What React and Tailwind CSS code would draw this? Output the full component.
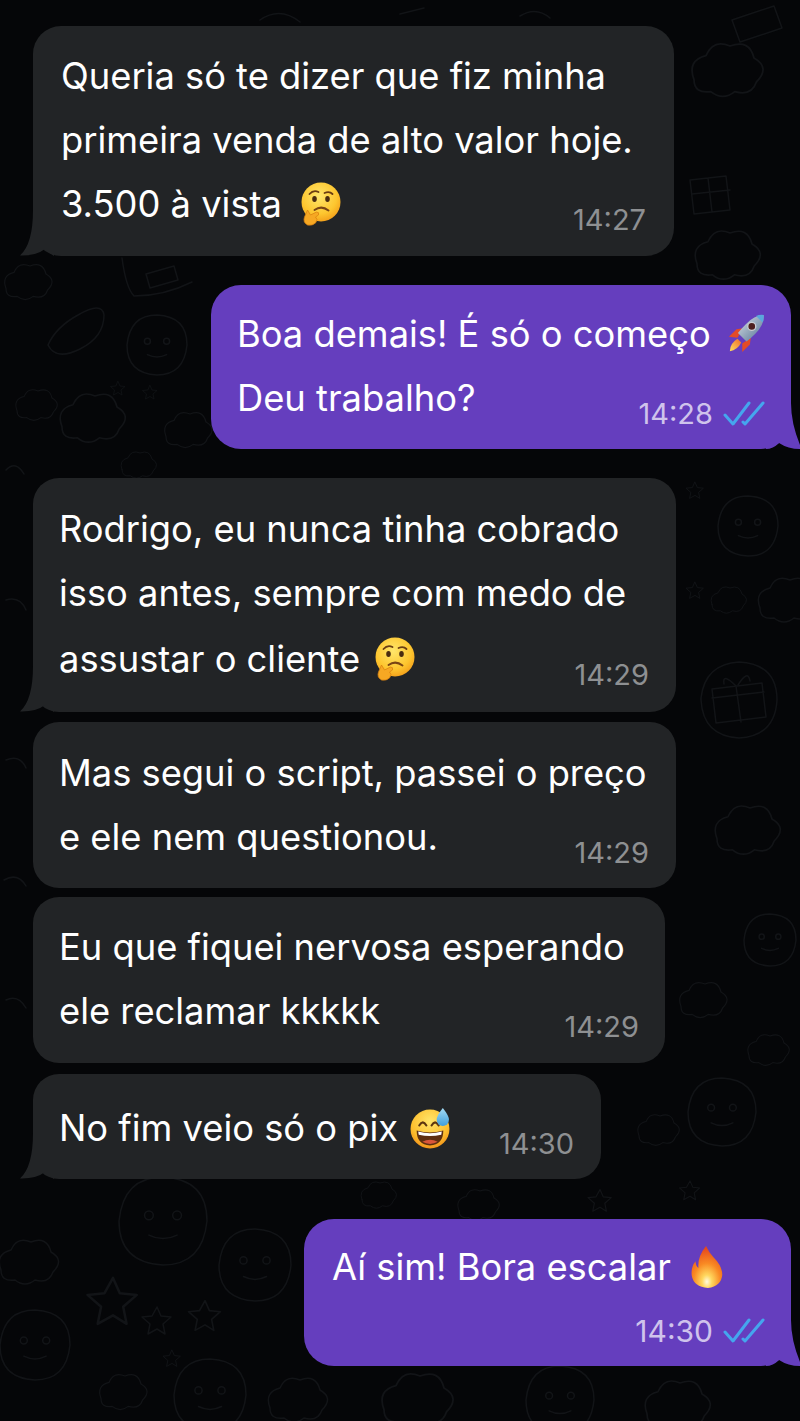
import React from "react";

const FONT = "font-['Inter','Liberation_Sans',sans-serif]";

function Thinking({ className }) {
  return (
    <svg viewBox="0 0 40 44" className={className}>
      <defs>
        <radialGradient id="tg" cx="0.45" cy="0.35" r="0.7">
          <stop offset="0" stopColor="#ffe66b" />
          <stop offset="0.65" stopColor="#fdc62f" />
          <stop offset="1" stopColor="#f29a17" />
        </radialGradient>
      </defs>
      <circle cx="20.5" cy="20" r="19.5" fill="url(#tg)" />
      <path d="M9 12 q4 -4.5 9 -2" fill="none" stroke="#6b3d12" strokeWidth="1.8" strokeLinecap="round" />
      <path d="M24 11 q5 -2 8 1" fill="none" stroke="#6b3d12" strokeWidth="1.8" strokeLinecap="round" />
      <ellipse cx="14" cy="17" rx="2.3" ry="3" fill="#4a2c10" />
      <ellipse cx="27" cy="17" rx="2.3" ry="3" fill="#4a2c10" />
      <path d="M14 28 q7 -5 14 0.5" fill="none" stroke="#7a4514" strokeWidth="2" strokeLinecap="round" />
      <path d="M7 28 l3 5 l6 -3 q3 0 2 3 l-3 2 q3 2 0 6 q-3 3 -8 2 q-5 -3 -3 -8 z" fill="#f6a823" stroke="#d9800f" strokeWidth="0.7" />
    </svg>
  );
}

function Sweat({ className }) {
  return (
    <svg viewBox="0 0 40 40" className={className}>
      <defs>
        <radialGradient id="sg" cx="0.5" cy="0.3" r="0.75">
          <stop offset="0" stopColor="#ffe56a" />
          <stop offset="0.65" stopColor="#fdbe2d" />
          <stop offset="1" stopColor="#ef8a16" />
        </radialGradient>
        <linearGradient id="dg" x1="0" y1="0" x2="0" y2="1">
          <stop offset="0" stopColor="#a5dcf5" />
          <stop offset="1" stopColor="#3f9fdc" />
        </linearGradient>
      </defs>
      <circle cx="19.5" cy="20.5" r="19" fill="url(#sg)" />
      <path d="M9 17 q3.5 -6 7 0 M21 17 q3.5 -6 7 0" fill="none" stroke="#5c3510" strokeWidth="2" strokeLinecap="round" />
      <path d="M6.5 22 q13 4 26 0 q0 14 -13 14.5 q-13 -0.5 -13 -14.5 z" fill="#5e2f10" />
      <path d="M8 23 q11.5 3.2 23 0 l-0.5 3 q-11 2.8 -22 0 z" fill="#fff" />
      <path d="M12 33 q7.5 -4 15 0 q-7.5 4 -15 0 z" fill="#d9563a" />
      <path d="M32 0 q6 7.5 6 11.5 a6 6 0 0 1 -12 0 q0 -4 6 -11.5 z" fill="url(#dg)" />
    </svg>
  );
}

function Rocket({ className }) {
  return (
    <svg viewBox="0 0 40 42" className={className}>
      <defs>
        <linearGradient id="rb" x1="0" y1="0" x2="1" y2="1">
          <stop offset="0" stopColor="#dbe3ea" />
          <stop offset="0.55" stopColor="#8fa3b8" />
          <stop offset="1" stopColor="#4e6f99" />
        </linearGradient>
        <linearGradient id="rf" x1="1" y1="0" x2="0" y2="1">
          <stop offset="0" stopColor="#f0692a" />
          <stop offset="1" stopColor="#fde25e" />
        </linearGradient>
      </defs>
      <path d="M2 24 l8 -8 l7 -1 l-6 10 z" fill="#e34b26" />
      <path d="M16 40 l8 -8 l1 -7 l-9 6 z" fill="#e34b26" />
      <path d="M3 39 q0 -8 8 -13 l4 4 q-4 8 -12 9 z" fill="url(#rf)" />
      <path d="M38.5 1 q1 10 -9 20 q-5 5 -9 8 l-9 -9 q3 -4 8 -9 q9 -10 19 -10 z" fill="url(#rb)" />
      <path d="M38.5 1 q0.5 4 -1 8 l-7 -7 q4 -1.5 8 -1 z" fill="#5aa8dd" />
      <circle cx="26" cy="13" r="4.2" fill="#4c1f1f" stroke="#c9ced4" strokeWidth="1.4" />
    </svg>
  );
}

function Fire({ className }) {
  return (
    <svg viewBox="0 0 34 44" className={className}>
      <defs>
        <radialGradient id="ff" cx="0.5" cy="0.85" r="0.8">
          <stop offset="0" stopColor="#fffbe0" />
          <stop offset="0.2" stopColor="#ffd75e" />
          <stop offset="0.55" stopColor="#f98a23" />
          <stop offset="1" stopColor="#e6481c" />
        </radialGradient>
      </defs>
      <path d="M16 0 q3 7 8 12 q9 9 9 18 q-1 12 -15 14 q-15 -1 -17 -13 q-1 -9 4 -15 q0 5 3 7 q-1 -12 8 -23 z" fill="url(#ff)" />
    </svg>
  );
}

function Checks({ className }) {
  return (
    <svg viewBox="0 0 42 26" className={className} fill="none" stroke="#45a6ee" strokeWidth="3" strokeLinecap="round" strokeLinejoin="round">
      <path d="M2 14 L10 23 L26 2" />
      <path d="M20 21 L22 23 L40 2" />
    </svg>
  );
}

function TailLeft({ color }) {
  return (
    <svg viewBox="0 0 34 46" className="absolute bottom-0 left-[-13px] w-[34px] h-[46px]">
      <path d="M13 0 Q13 34 0 45.5 Q16 46 25 39 Q30 44 34 46 L34 0 Z" fill={color} />
    </svg>
  );
}

function TailRight({ color }) {
  return (
    <svg viewBox="0 0 34 46" className="absolute bottom-0 right-[-9px] w-[34px] h-[46px]">
      <path d="M25 0 Q25 20 34 42 L34 46 Q22 46 13 40 Q7 46 0 46 L0 0 Z" fill={color} />
    </svg>
  );
}

function Face({ cx, cy, r }) {
  const e = r * 0.32;
  return (
    <g>
      <path d={`M${cx - r} ${cy} q${r * 0.1} ${-r} ${r} ${-r} q${r} ${r * 0.05} ${r} ${r} q${-r * 0.1} ${r} ${-r} ${r} q${-r} ${-r * 0.05} ${-r} ${-r} z`} />
      <circle cx={cx - e} cy={cy - e * 0.4} r={r * 0.1} />
      <circle cx={cx + e} cy={cy - e * 0.4} r={r * 0.1} />
      <path d={`M${cx - e} ${cy + e} q${e} ${e * 0.5} ${e * 2} 0`} />
    </g>
  );
}

function Star({ x, y, s = 1 }) {
  return <path transform={`translate(${x} ${y}) scale(${s})`} d="M0 -13 l4 9 l10 1 l-8 7 l2 10 l-8 -5 l-9 5 l2 -10 l-8 -7 l10 -1 z" />;
}

function Gift({ x, y }) {
  return (
    <g transform={`translate(${x} ${y})`}>
      <path d="M-27 -11 l50 -6 l4 34 l-50 6 z M-27 -2 l52 -6 M-3 -14 l5 36" />
      <path d="M-3 -14 q-14 -14 -12 -2 M-1 -15 q10 -16 12 -4" />
      <path d="M-38 -2 q4 -34 38 -36 q38 2 38 38 q-2 36 -38 38 q-36 -2 -38 -38 z" />
    </g>
  );
}

function Cloud({ x, y, s = 1 }) {
  return <path transform={`translate(${x} ${y}) scale(${s})`} d="M-30 8 q-6 -16 10 -20 q6 -14 20 -8 q16 -6 20 10 q14 8 2 20 q-4 12 -18 8 q-10 8 -20 0 q-14 2 -14 -10 z" />;
}

function Doodles() {
  return (
    <svg viewBox="0 0 800 1421" className="absolute inset-0 w-[800px] h-[1421px]" fill="none" stroke="#121417" strokeWidth="1.5" strokeLinecap="round" strokeLinejoin="round">
      <Face cx={157} cy={345} r={30} />
      <path d="M48 345 q8 -18 30 -30 q24 -14 26 0 q0 22 -24 34 q-24 12 -32 -4 z" />
      <Cloud x={30} y={282} s={0.8} />
      <path d="M122 258 q4 30 12 38 q30 0 58 -14 M146 274 l28 -8 l4 14 l-28 8 z" />
      <Cloud x={95} y={418} s={1.1} />
      <Cloud x={38} y={405} s={0.7} />
      <Star x={118} y={388} s={0.5} />
      <Star x={150} y={392} s={0.5} />
      <Cloud x={190} y={430} s={0.8} />
      <Cloud x={140} y={465} s={0.6} />
      <Cloud x={730} y={70} s={1.2} />
      <path d="M732 20 l42 -14 l8 22 l-42 14 z" />
      <path d="M690 180 l36 -4 l4 34 l-36 4 z M692 194 l38 -4 M708 178 l4 34" />
      <Cloud x={730} y={255} s={1.1} />
      <Face cx={748} cy={526} r={30} />
      <Cloud x={790} y={600} s={1} />
      <Cloud x={730} y={600} s={0.6} />
      <Gift x={739} y={700} />
      <Star x={695} y={490} s={0.6} />
      <Star x={695} y={590} s={0.6} />
      <Cloud x={750} y={830} s={1.1} />
      <Face cx={770} cy={940} r={26} />
      <Cloud x={705} y={1000} s={0.8} />
      <Cloud x={770} y={1050} s={0.7} />
      <Face cx={722} cy={1112} r={34} />
      <Cloud x={660} y={1130} s={0.7} />
      <Star x={690} y={1190} s={0.7} />
      <Face cx={163} cy={1221} r={44} />
      <Cloud x={31} y={1262} s={1} />
      <Face cx={255} cy={1265} r={36} />
      <Face cx={35} cy={1345} r={35} />
      <Face cx={210} cy={1395} r={36} />
      <Star x={113} y={1300} s={1.7} />
      <Star x={157} y={1320} s={1} />
      <Star x={205} y={1315} s={1.1} />
      <Cloud x={125} y={1392} s={0.8} />
      <Star x={172} y={1358} s={0.6} />
      <Cloud x={300} y={1400} s={1} />
      <Cloud x={420} y={1400} s={1.2} />
      <Face cx={560} cy={1400} r={34} />
      <Cloud x={680} y={1405} s={1.1} />
      <Cloud x={480} y={1205} s={0.7} />
      <Star x={600} y={1200} s={0.8} />
      <Cloud x={380} y={1195} s={0.6} />
      <path d="M260 20 q20 -14 40 2 M400 14 l24 -6 M520 16 q16 -10 30 2" />
      <path d="M6 470 q10 -10 18 4 M6 600 q14 -4 20 10 M6 760 q14 -6 20 8 M4 880 q14 -8 22 6 M6 1000 q12 -6 20 8" />
    </svg>
  );
}

function Line({ children }) {
  return <span className="flex items-center whitespace-nowrap h-[64px]">{children}</span>;
}

function Time({ children, className = "" }) {
  return <span className={`text-[29px] leading-[32px] whitespace-nowrap ${className}`}>{children}</span>;
}

export default function App() {
  return (
    <div className={`relative w-[800px] h-[1421px] overflow-hidden bg-[#050608] text-white text-[36.3px] ${FONT}`}>
      <Doodles />
      <div className="relative flex flex-col pt-[26px]">
        <div className="ml-[33px] w-[641px] relative bg-[#222426] rounded-[28px] pl-[28px] pr-[28px] pt-[18px] pb-[20px]">
          <TailLeft color="#222426" />
          <div className="relative flex flex-col">
            <Line>Queria só te dizer que fiz minha</Line>
            <Line>primeira venda de alto valor hoje.</Line>
            <div className="flex justify-between items-end">
              <Line>3.500 à vista&nbsp;<Thinking className="w-[41px] h-[44px] ml-[8px]" /></Line>
              <Time className="text-[#8e9092]">14:27</Time>
            </div>
          </div>
        </div>

        <div className="self-start ml-[211px] mt-[29px] w-[580px] relative bg-[#653ebe] rounded-[30px] pl-[26px] pr-[26px] pt-[17px] pb-[19px]">
          <TailRight color="#653ebe" />
          <div className="relative flex flex-col">
            <Line>Boa demais! É só o começo&nbsp;<Rocket className="w-[41px] h-[42px] ml-[6px]" /></Line>
            <div className="flex justify-between items-end">
              <Line>Deu trabalho?</Line>
              <span className="flex items-center gap-[10px]">
                <Time className="text-[#cfc3ec]">14:28</Time>
                <Checks className="w-[42px] h-[26px]" />
              </span>
            </div>
          </div>
        </div>

        <div className="ml-[33px] mt-[29px] w-[643px] relative bg-[#222426] rounded-[26px] pl-[26px] pr-[27px] pt-[19px] pb-[21px]">
          <TailLeft color="#222426" />
          <div className="relative flex flex-col">
            <Line>Rodrigo, eu nunca tinha cobrado</Line>
            <Line>isso antes, sempre com medo de</Line>
            <div className="flex justify-between items-end mt-[2px]">
              <Line>assustar o cliente&nbsp;<Thinking className="w-[41px] h-[44px] ml-[4px]" /></Line>
              <Time className="text-[#8e9092]">14:29</Time>
            </div>
          </div>
        </div>

        <div className="ml-[33px] mt-[10px] w-[643px] bg-[#222426] rounded-[26px] pl-[26px] pr-[27px] pt-[19px] pb-[19px]">
          <div className="flex flex-col">
            <Line>Mas segui o script, passei o preço</Line>
            <div className="flex justify-between items-end">
              <Line>e ele nem questionou.</Line>
              <Time className="text-[#8e9092]">14:29</Time>
            </div>
          </div>
        </div>

        <div className="ml-[33px] mt-[9px] w-[632px] bg-[#222426] rounded-[26px] pl-[26px] pr-[26px] pt-[18px] pb-[20px]">
          <div className="flex flex-col">
            <Line>Eu que fiquei nervosa esperando</Line>
            <div className="flex justify-between items-end">
              <Line>ele reclamar kkkkk</Line>
              <Time className="text-[#8e9092]">14:29</Time>
            </div>
          </div>
        </div>

        <div className="ml-[33px] mt-[11px] w-[568px] relative bg-[#222426] rounded-[26px] pl-[26px] pr-[27px] pt-[22px] pb-[19px]">
          <TailLeft color="#222426" />
          <div className="relative flex justify-between items-end">
            <Line>No fim veio só o pix&nbsp;<Sweat className="w-[41px] h-[41px] ml-[2px]" /></Line>
            <Time className="text-[#8e9092]">14:30</Time>
          </div>
        </div>

        <div className="self-start ml-[304px] mt-[40px] w-[487px] relative bg-[#653ebe] rounded-[30px] pl-[28px] pr-[26px] pt-[16px] pb-[19px]">
          <TailRight color="#653ebe" />
          <div className="relative flex flex-col items-start">
            <Line>Aí sim! Bora escalar&nbsp;<Fire className="w-[34px] h-[42px] ml-[9px]" /></Line>
            <span className="self-end flex items-center gap-[10px] mt-[16px]">
              <Time className="text-[#cfc3ec] text-[30px]">14:30</Time>
              <Checks className="w-[42px] h-[26px]" />
            </span>
          </div>
        </div>
      </div>
    </div>
  );
}
